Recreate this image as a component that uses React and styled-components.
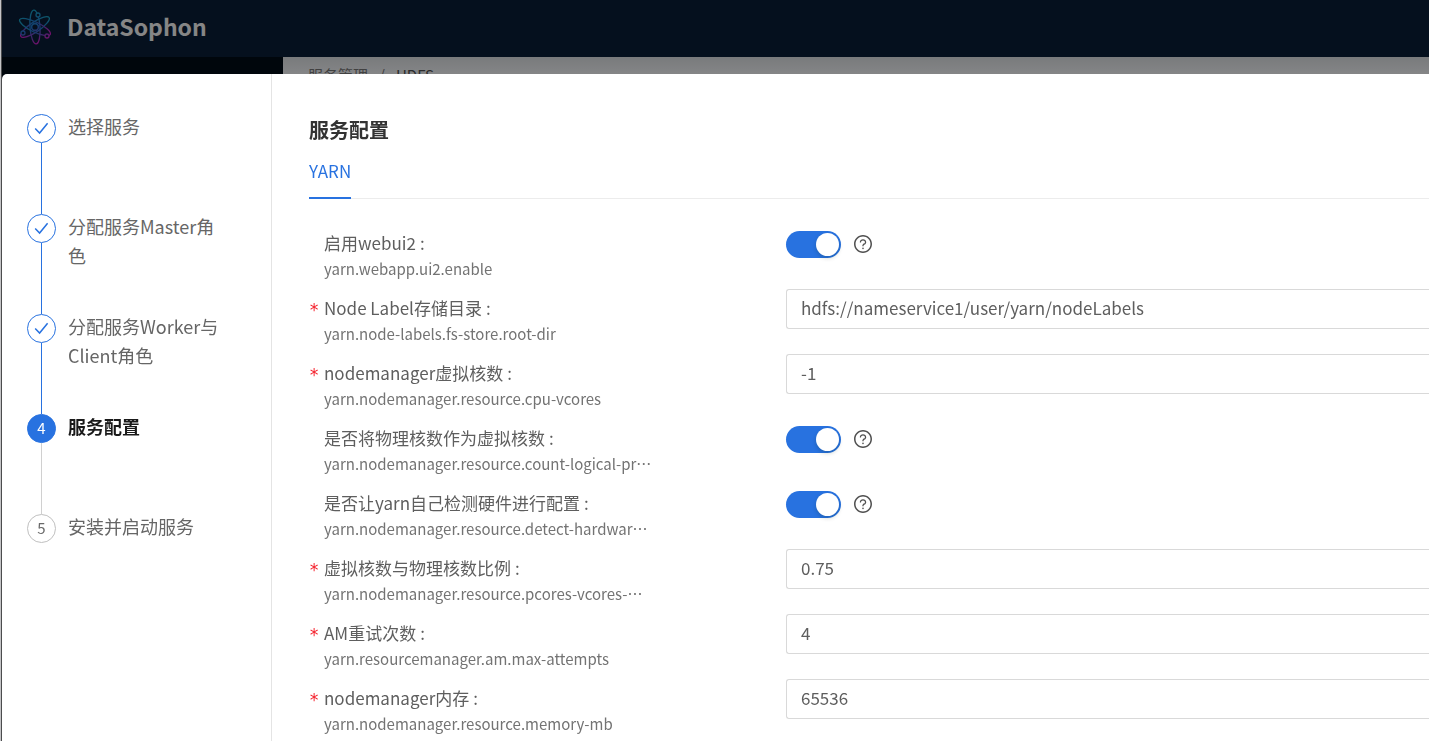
import React from 'react';
import styled, { createGlobalStyle } from 'styled-components';

const BLUE = '#2872e0';

const GlobalStyle = createGlobalStyle`
  *, *::before, *::after { box-sizing: border-box; }
  html, body, #root { height: 100%; }
  body {
    margin: 0;
    overflow: hidden;
    background: #c4c4c6;
    color: #5e5e5e;
    font-family: 'Noto Sans CJK SC', 'Noto Sans', sans-serif;
    font-size: 18px;
  }
  h1, h2, p, ol { margin: 0; padding: 0; }
  button, input { font: inherit; color: inherit; }
`;

const Page = styled.div`
  display: flex;
  flex-direction: column;
  height: 100%;
  margin-left: 1px;
  border-left: 1px solid #4b4c4e;
`;

const Header = styled.header`
  display: flex;
  align-items: center;
  gap: 12px;
  height: 57px;
  padding: 0 16px 3px;
  background: #0a1e38;
`;

const Brand = styled.h1`
  padding-bottom: 2px;
  color: #f4f4f4;
  font-size: 23px;
  font-weight: 700;
  line-height: 36px;
`;

const Body = styled.div`
  display: flex;
  flex: 1;
`;

const Sider = styled.nav`
  flex: 0 0 281px;
  background: #000c17;
`;

const Content = styled.main`
  flex: 1;
  padding: 7px 25px;
  background: linear-gradient(#dcdfe2, #f0f2f5 16px);
`;

const Breadcrumb = styled.nav`
  display: flex;
  gap: 11px;
  color: #777;
  font-size: 15px;
  line-height: 22px;

  a { color: #777; text-decoration: none; }
  a[aria-current] { color: #505050; }
`;

const Mask = styled.div`
  position: fixed;
  inset: 0 0 0 2px;
  padding-top: 74px;
  background: rgba(0, 0, 0, 0.45);
`;

const Dialog = styled.section`
  display: flex;
  height: 100%;
  overflow: hidden;
  border-top-left-radius: 5px;
  background: #fff;
`;

const StepPane = styled.aside`
  flex: 0 0 270px;
  padding: 40px 40px 0 25px;
  border-right: 1px solid #e4e4e4;
`;

const Steps = styled.ol`
  list-style: none;
`;

const Step = styled.li`
  display: flex;
  gap: 12px;
  height: 100px;
`;

const Rail = styled.div`
  display: flex;
  flex: 0 0 29px;
  flex-direction: column;
  align-items: center;

  &::after {
    content: ${({ $last }) => ($last ? 'none' : "''")};
    flex: 1;
    width: 1px;
    background: ${({ $done }) => ($done ? BLUE : '#d0d0d0')};
  }
`;

const Dot = styled.span`
  display: flex;
  align-items: center;
  justify-content: center;
  width: 29px;
  height: 29px;
  padding-bottom: ${({ $state }) => ($state === 'done' ? 0 : 2)}px;
  border: 1px solid ${({ $state }) => ($state === 'wait' ? '#bfbfbf' : BLUE)};
  border-radius: 50%;
  background: ${({ $state }) => ($state === 'active' ? BLUE : '#fff')};
  color: ${({ $state }) => ($state === 'active' ? '#fff' : '#6a6a6a')};
  font-size: 15px;
  line-height: 25px;
`;

const StepTitle = styled.p`
  flex: 1;
  margin-top: -2px;
  color: ${({ $active }) => ($active ? '#1a1a1a' : '#666')};
  font-weight: ${({ $active }) => ($active ? 700 : 400)};
  line-height: 29px;
  word-break: break-word;
`;

const ConfigPane = styled.div`
  flex: 1;
  min-width: 0;
  padding: 40px 0 0 37px;
`;

const Title = styled.h2`
  color: #333;
  font-size: 20px;
  font-weight: 700;
  line-height: 32px;
`;

const Tabs = styled.div`
  display: flex;
  margin-bottom: 23px;
  border-bottom: 1px solid #ececec;
`;

const Tab = styled.button`
  height: 53px;
  margin-bottom: -1px;
  padding: 0 0 2px;
  border: 0;
  border-bottom: 2px solid ${BLUE};
  background: none;
  color: ${BLUE};
  font-size: 17px;
`;

const Row = styled.div`
  display: grid;
  grid-template-columns: 343px 1fr;
  column-gap: 134px;
  height: 65px;
`;

const LabelCell = styled.div`
  min-width: 0;
  padding-top: 7px;
`;

const Label = styled.label`
  display: flex;
  height: 28px;
  font-size: 17px;
  line-height: 28px;
  white-space: nowrap;

  &::before {
    content: ${({ $required }) => ($required ? "'*'" : "''")};
    flex: 0 0 15px;
    padding-top: 2px;
    color: #f5222d;
    font-family: 'DejaVu Sans Mono', monospace;
    font-size: 17px;
  }

  &::after {
    content: ':';
    margin-left: 4px;
  }
`;

const Key = styled.p`
  margin-left: 15px;
  overflow: hidden;
  color: #737373;
  font-size: 15px;
  line-height: 24px;
  text-overflow: ellipsis;
  white-space: nowrap;
`;

const TextInput = styled.input`
  width: 100%;
  height: 40px;
  margin-top: 2px;
  padding: 0 14px 3px;
  border: 1px solid #d9d9d9;
  border-right: 0;
  border-radius: 3px 0 0 3px;
  outline: 0;
  background: #fff;
  font-size: 17px;
`;

const SwitchCell = styled.div`
  display: flex;
  align-items: center;
  gap: 13px;
  height: 27px;
  margin-top: 9px;
`;

const Switch = styled.input`
  display: flex;
  appearance: none;
  justify-content: flex-end;
  width: 55px;
  height: 27px;
  margin: 0;
  padding: 2px;
  border-radius: 14px;
  background: ${BLUE};

  &::before {
    content: '';
    width: 23px;
    height: 23px;
    border-radius: 50%;
    background: #fff;
    box-shadow: 0 2px 4px rgba(0, 35, 11, 0.2);
  }
`;

const HelpButton = styled.button`
  display: flex;
  padding: 0 0 2px;
  border: 0;
  background: none;
`;

const Logo = () => (
  <svg width="37" height="38" viewBox="0 0 37 38" fill="none" aria-hidden="true">
    <defs>
      <linearGradient id="atom" x1="10" y1="2" x2="24" y2="36" gradientUnits="userSpaceOnUse">
        <stop offset="0" stopColor="#16a9c4" />
        <stop offset="0.5" stopColor="#2470c8" />
        <stop offset="0.75" stopColor="#7940bd" />
        <stop offset="1" stopColor="#ec14c8" />
      </linearGradient>
    </defs>
    <g stroke="url(#atom)" strokeWidth="1.3">
      <ellipse cx="17" cy="19" rx="5" ry="17" transform="rotate(-4 17 19)" />
      <ellipse cx="17" cy="19" rx="5" ry="17" transform="rotate(56 17 19)" />
      <ellipse cx="17" cy="19" rx="5" ry="17" transform="rotate(-64 17 19)" />
      <circle cx="17" cy="19" r="3.4" strokeWidth="1.6" />
      <circle cx="20" cy="7" r="2" fill="#0a1e38" />
      <circle cx="5" cy="25" r="2" fill="#0a1e38" />
      <circle cx="29" cy="28" r="2" fill="#0a1e38" />
    </g>
  </svg>
);

const Check = () => (
  <svg width="15" height="15" viewBox="0 0 15 15" fill="none" stroke={BLUE} strokeWidth="1.5" aria-hidden="true">
    <path d="M1.2 7.4 5.6 12 13.6 2.2" />
  </svg>
);

const HelpIcon = () => (
  <svg width="18" height="18" viewBox="64 64 896 896" fill="#505050" aria-hidden="true">
    <path d="M512 64C264.600 64 64 264.600 64 512s200.600 448 448 448 448-200.600 448-448S759.400 64 512 64zm0 820c-205.400 0-372-166.600-372-372s166.600-372 372-372 372 166.600 372 372-166.600 372-372 372z" />
    <path d="M623.600 316.700C593.600 290.400 554 276 512 276s-81.600 14.500-111.600 40.700C369.200 344 352 380.700 352 420v7.600c0 4.400 3.600 8 8 8h48c4.400 0 8-3.600 8-8V420c0-44.100 43.100-80 96-80s96 35.900 96 80c0 31.100-22 59.600-56.100 72.700-21.200 8.100-39.200 22.300-52.100 40.900-13.100 19-19.900 41.800-19.900 64.900V620c0 4.400 3.600 8 8 8h48c4.400 0 8-3.600 8-8v-22.700a48.300 48.300 0 0 1 30.900-44.800c59-22.700 97.100-74.700 97.100-132.500.100-39.300-17.100-76-48.300-103.300zM472 732a40 40 0 1 0 80 0 40 40 0 1 0-80 0z" />
  </svg>
);

const steps = [
  { title: '选择服务', state: 'done' },
  { title: '分配服务Master角色', state: 'done' },
  { title: '分配服务Worker与Client角色', state: 'done' },
  { title: '服务配置', state: 'active' },
  { title: '安装并启动服务', state: 'wait' },
];

const fields = [
  { label: '启用webui2', name: 'yarn.webapp.ui2.enable' },
  { label: 'Node Label存储目录', name: 'yarn.node-labels.fs-store.root-dir', value: 'hdfs://nameservice1/user/yarn/nodeLabels' },
  { label: 'nodemanager虚拟核数', name: 'yarn.nodemanager.resource.cpu-vcores', value: '-1' },
  { label: '是否将物理核数作为虚拟核数', name: 'yarn.nodemanager.resource.count-logical-processors-as-cores' },
  { label: '是否让yarn自己检测硬件进行配置', name: 'yarn.nodemanager.resource.detect-hardware-capabilities' },
  { label: '虚拟核数与物理核数比例', name: 'yarn.nodemanager.resource.pcores-vcores-multiplier', value: '0.75' },
  { label: 'AM重试次数', name: 'yarn.resourcemanager.am.max-attempts', value: '4' },
  { label: 'nodemanager内存', name: 'yarn.nodemanager.resource.memory-mb', value: '65536' },
];

const Field = ({ label, name, value }) => {
  const isText = value !== undefined;
  return (
    <Row>
      <LabelCell>
        <Label htmlFor={name} $required={isText}>{label}</Label>
        <Key>{name}</Key>
      </LabelCell>
      {isText ? (
        <TextInput id={name} type="text" defaultValue={value} />
      ) : (
        <SwitchCell>
          <Switch id={name} type="checkbox" role="switch" defaultChecked />
          <HelpButton type="button" aria-label="帮助"><HelpIcon /></HelpButton>
        </SwitchCell>
      )}
    </Row>
  );
};

export default function App() {
  return (
    <>
      <GlobalStyle />
      <Page>
        <Header>
          <Logo />
          <Brand>DataSophon</Brand>
        </Header>
        <Body>
          <Sider />
          <Content>
            <Breadcrumb>
              <a href="#services">服务管理</a>
              <span>/</span>
              <a href="#hdfs" aria-current="page">HDFS</a>
            </Breadcrumb>
          </Content>
        </Body>
      </Page>
      <Mask>
        <Dialog role="dialog" aria-label="服务配置">
          <StepPane>
            <Steps>
              {steps.map(({ title, state }, i) => (
                <Step key={title}>
                  <Rail $done={state === 'done'} $last={i === steps.length - 1}>
                    <Dot $state={state}>{state === 'done' ? <Check /> : i + 1}</Dot>
                  </Rail>
                  <StepTitle $active={state === 'active'}>{title}</StepTitle>
                </Step>
              ))}
            </Steps>
          </StepPane>
          <ConfigPane>
            <Title>服务配置</Title>
            <Tabs role="tablist">
              <Tab type="button" role="tab" aria-selected="true">YARN</Tab>
            </Tabs>
            <form>
              {fields.map((field) => <Field key={field.name} {...field} />)}
            </form>
          </ConfigPane>
        </Dialog>
      </Mask>
    </>
  );
}
